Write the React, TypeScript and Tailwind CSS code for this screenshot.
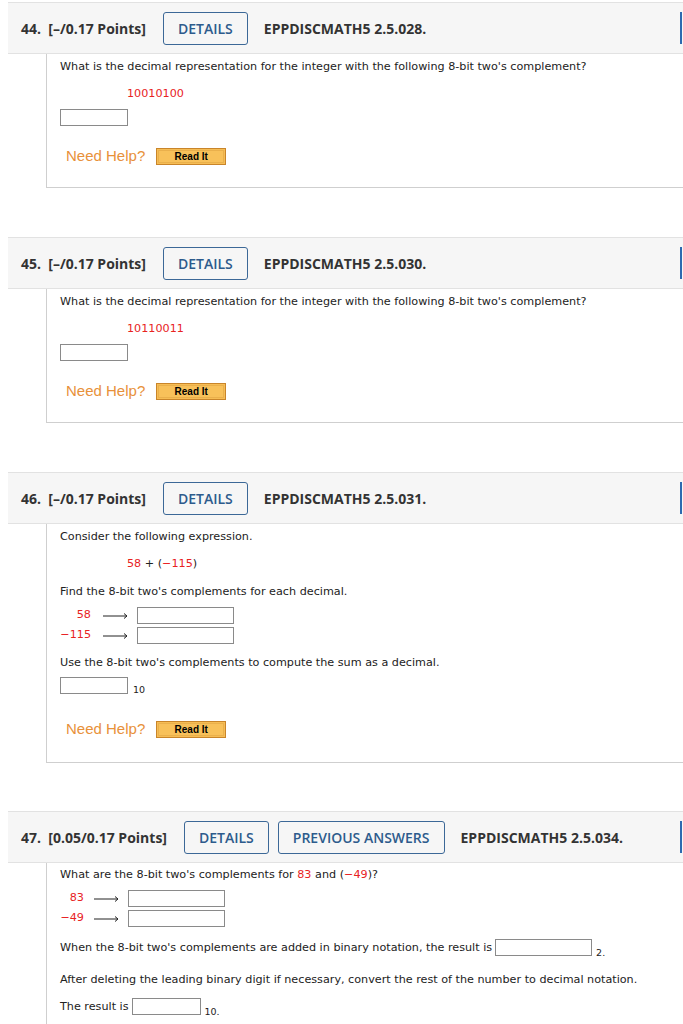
import React from "react";

const body = { fontFamily: '"DejaVu Sans", Verdana, sans-serif' };
const head = { fontFamily: '"Open Sans", Arial, sans-serif' };

function Header({ num, pts, buttons, code }: { num: string; pts: string; buttons: string[]; code: string }) {
  return (
    <div className="ml-[8px] w-[760px] h-[52px] bg-[#f6f6f6] border-y border-[#e2e2e2] flex items-center pl-[13px] text-[14px] font-bold text-[#333]" style={head}>
      <span className="whitespace-pre">{num}  {pts}</span>
      <div className="flex gap-[9px] ml-[17px]">
        {buttons.map((b) => (
          <div key={b} className="h-[33px] px-[14px] flex items-center border border-[#3c6897] rounded-[3px] text-[#2d5b8c] font-semibold">
            {b}
          </div>
        ))}
      </div>
      <span className="ml-[16px]">{code}</span>
      <div className="absolute left-[680px] h-[32px] w-[20px] border-l-2 border-[#2d6ab0]" />
    </div>
  );
}

function Box({ w = 68 }: { w?: number }) {
  return <span className="inline-block h-[17px] border border-[#8a8a8a] bg-white align-middle" style={{ width: w }} />;
}

function NeedHelp() {
  return (
    <div className="flex items-center gap-[11px] ml-[6px] h-[18px]" style={{ fontFamily: '"Liberation Sans", Arial, sans-serif' }}>
      <span className="text-[15px] leading-[18px] text-[#e8913a]">Need Help?</span>
      <div className="w-[70px] h-[17px] border border-[#c9852a] bg-[#f6bd55] flex items-center justify-center p-[1px]">
        <div className="w-full h-full border border-[#eab04c] bg-[#f8c15a] flex items-center justify-center text-[10px] font-bold text-black">Read It</div>
      </div>
    </div>
  );
}

function Arrow() {
  return (
    <svg width="25" height="8" viewBox="0 0 25 8" className="block">
      <line x1="0" y1="4" x2="24" y2="4" stroke="#222" strokeWidth="1" />
      <path d="M21 1.5 L24 4 L21 6.5" fill="none" stroke="#222" strokeWidth="1" />
    </svg>
  );
}

export default function App() {
  return (
    <div className="w-[683px] h-[1024px] overflow-hidden bg-white relative pt-[2px]" style={body}>
      {/* Q44 */}
      <div className="relative">
        <Header num="44." pts="[–/0.17 Points]" buttons={["DETAILS"]} code="EPPDISCMATH5 2.5.028." />
        <div className="ml-[46px] w-[700px] border-l border-b border-[#cfcfcf] pl-[13px] pt-[5px] pb-[22px] text-[11.2px] text-[#222]">
          <div className="h-[16px] leading-[16px]">What is the decimal representation for the integer with the following 8-bit two's complement?</div>
          <div className="mt-[11px] ml-[67px] text-[#e8231f] h-[16px] leading-[16px]">10010100</div>
          <div className="mt-[7px] h-[18px]"><Box /></div>
          <div className="mt-[20px]"><NeedHelp /></div>
        </div>
      </div>

      {/* Q45 */}
      <div className="relative mt-[49px]">
        <Header num="45." pts="[–/0.17 Points]" buttons={["DETAILS"]} code="EPPDISCMATH5 2.5.030." />
        <div className="ml-[46px] w-[700px] border-l border-b border-[#cfcfcf] pl-[13px] pt-[5px] pb-[22px] text-[11.2px] text-[#222]">
          <div className="h-[16px] leading-[16px]">What is the decimal representation for the integer with the following 8-bit two's complement?</div>
          <div className="mt-[11px] ml-[67px] text-[#e8231f] h-[16px] leading-[16px]">10110011</div>
          <div className="mt-[7px] h-[18px]"><Box /></div>
          <div className="mt-[20px]"><NeedHelp /></div>
        </div>
      </div>

      {/* Q46 */}
      <div className="relative mt-[49px]">
        <Header num="46." pts="[–/0.17 Points]" buttons={["DETAILS"]} code="EPPDISCMATH5 2.5.031." />
        <div className="ml-[46px] w-[700px] border-l border-b border-[#cfcfcf] pl-[13px] pt-[5px] pb-[24px] text-[11.2px] text-[#222]">
          <div className="h-[16px] leading-[16px]">Consider the following expression.</div>
          <div className="mt-[11px] ml-[67px] h-[16px] leading-[16px]">
            <span className="text-[#e8231f]">58</span> + (<span className="text-[#e8231f]">−115</span>)
          </div>
          <div className="mt-[12px] h-[16px] leading-[16px]">Find the 8-bit two's complements for each decimal.</div>
          <div className="mt-[7px] flex flex-col gap-[3px]">
            {["58", "−115"].map((n) => (
              <div key={n} className="flex items-center h-[17px]">
                <span className="w-[31px] text-right text-[#e8231f]">{n}</span>
                <span className="ml-[12px] w-[34px]"><Arrow /></span>
                <Box w={97} />
              </div>
            ))}
          </div>
          <div className="mt-[11px] h-[16px] leading-[16px]">Use the 8-bit two's complements to compute the sum as a decimal.</div>
          <div className="mt-[5px] flex items-end h-[18px]">
            <Box />
            <span className="ml-[5px] text-[9.5px] leading-[12px] relative top-[2px]">10</span>
          </div>
          <div className="mt-[26px]"><NeedHelp /></div>
        </div>
      </div>

      {/* Q47 */}
      <div className="relative mt-[48px]">
        <Header num="47." pts="[0.05/0.17 Points]" buttons={["DETAILS", "PREVIOUS ANSWERS"]} code="EPPDISCMATH5 2.5.034." />
        <div className="ml-[46px] w-[700px] border-l border-[#cfcfcf] pl-[13px] pt-[4px] pb-[24px] text-[11.2px] text-[#222]">
          <div className="h-[16px] leading-[16px]">
            What are the 8-bit two's complements for <span className="text-[#e8231f]">83</span> and (<span className="text-[#e8231f]">−49</span>)?
          </div>
          <div className="mt-[7px] flex flex-col gap-[3px]">
            {["83", "−49"].map((n) => (
              <div key={n} className="flex items-center h-[17px]">
                <span className="w-[24px] text-right text-[#e8231f]">{n}</span>
                <span className="ml-[10px] w-[34px]"><Arrow /></span>
                <Box w={97} />
              </div>
            ))}
          </div>
          <div className="mt-[12px] flex items-center h-[18px]">
            <span>When the 8-bit two's complements are added in binary notation, the result is</span>
            <span className="ml-[3px]"><Box w={97} /></span>
            <span className="ml-[4px] text-[9.5px] relative top-[5px]">2.</span>
          </div>
          <div className="mt-[15px] h-[16px] leading-[16px]">After deleting the leading binary digit if necessary, convert the rest of the number to decimal notation.</div>
          <div className="mt-[10px] flex items-center h-[18px]">
            <span>The result is</span>
            <span className="ml-[3px]"><Box w={69} /></span>
            <span className="ml-[4px] text-[9.5px] relative top-[5px]">10.</span>
          </div>
        </div>
      </div>
    </div>
  );
}
